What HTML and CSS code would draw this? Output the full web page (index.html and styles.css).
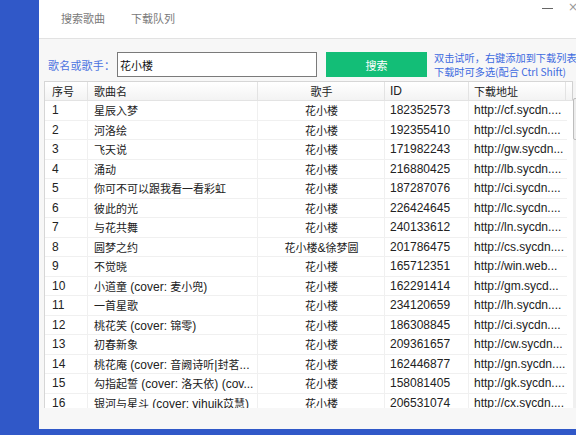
FILE: index.html
```html
<!DOCTYPE html>
<html lang="zh-CN">
<head>
<meta charset="utf-8">
<title>搜索歌曲</title>
<link rel="stylesheet" href="styles.css">
</head>
<body>
<div class="screen">
  <div class="sidebar"></div>
  <div class="window">
    <div class="titlebar">
      <div class="tabs">
        <span class="tab">搜索歌曲</span>
        <span class="tab">下载队列</span>
      </div>
      <div class="controls">
        <span class="min"></span>
        <span class="close">×</span>
      </div>
    </div>
    <div class="content">
      <div class="searchrow">
        <span class="label">歌名或歌手：</span>
        <div class="input"><span class="zh">花小楼</span></div>
        <button class="btn">搜索</button>
        <div class="hint">
          <div>双击试听，右键添加到下载列表</div>
          <div>下载时可多选(配合 Ctrl Shift)</div>
        </div>
      </div>
      <div class="listwrap">
        <div class="list">
          <div class="head">
            <div class="c num">序号</div>
            <div class="c song">歌曲名</div>
            <div class="c singer">歌手</div>
            <div class="c id">ID</div>
            <div class="c url">下载地址</div>
            <div class="c fill"></div>
          </div>
          <div class="rows">
            <div class="row"><div class="c num">1</div><div class="c song zh">星辰入梦</div><div class="c singer zh">花小楼</div><div class="c id">182352573</div><div class="c url">http://cf.sycdn....</div></div>
            <div class="row"><div class="c num">2</div><div class="c song zh">河洛绘</div><div class="c singer zh">花小楼</div><div class="c id">192355410</div><div class="c url">http://cl.sycdn....</div></div>
            <div class="row"><div class="c num">3</div><div class="c song zh">飞天说</div><div class="c singer zh">花小楼</div><div class="c id">171982243</div><div class="c url">http://gw.sycdn...</div></div>
            <div class="row"><div class="c num">4</div><div class="c song zh">涌动</div><div class="c singer zh">花小楼</div><div class="c id">216880425</div><div class="c url">http://lb.sycdn....</div></div>
            <div class="row"><div class="c num">5</div><div class="c song zh">你可不可以跟我看一看彩虹</div><div class="c singer zh">花小楼</div><div class="c id">187287076</div><div class="c url">http://ci.sycdn....</div></div>
            <div class="row"><div class="c num">6</div><div class="c song zh">彼此的光</div><div class="c singer zh">花小楼</div><div class="c id">226424645</div><div class="c url">http://lc.sycdn....</div></div>
            <div class="row"><div class="c num">7</div><div class="c song zh">与花共舞</div><div class="c singer zh">花小楼</div><div class="c id">240133612</div><div class="c url">http://ln.sycdn....</div></div>
            <div class="row"><div class="c num">8</div><div class="c song zh">圆梦之约</div><div class="c singer"><span class="zh">花小楼</span>&amp;<span class="zh">徐梦圆</span></div><div class="c id">201786475</div><div class="c url">http://cs.sycdn....</div></div>
            <div class="row"><div class="c num">9</div><div class="c song zh">不觉晓</div><div class="c singer zh">花小楼</div><div class="c id">165712351</div><div class="c url">http://win.web...</div></div>
            <div class="row"><div class="c num">10</div><div class="c song"><span class="zh">小道童</span> (cover: <span class="zh">麦小兜</span>)</div><div class="c singer zh">花小楼</div><div class="c id">162291414</div><div class="c url">http://gm.sycd...</div></div>
            <div class="row"><div class="c num">11</div><div class="c song zh">一首星歌</div><div class="c singer zh">花小楼</div><div class="c id">234120659</div><div class="c url">http://lh.sycdn....</div></div>
            <div class="row"><div class="c num">12</div><div class="c song"><span class="zh">桃花笑</span> (cover: <span class="zh">锦零</span>)</div><div class="c singer zh">花小楼</div><div class="c id">186308845</div><div class="c url">http://ci.sycdn....</div></div>
            <div class="row"><div class="c num">13</div><div class="c song zh">初春新象</div><div class="c singer zh">花小楼</div><div class="c id">209361657</div><div class="c url">http://cw.sycdn...</div></div>
            <div class="row"><div class="c num">14</div><div class="c song"><span class="zh">桃花庵</span> (cover: <span class="zh">音阙诗听</span>|<span class="zh">封茗</span>...</div><div class="c singer zh">花小楼</div><div class="c id">162446877</div><div class="c url">http://gn.sycdn....</div></div>
            <div class="row"><div class="c num">15</div><div class="c song"><span class="zh">勾指起誓</span> (cover: <span class="zh">洛天依</span>) (cov...</div><div class="c singer zh">花小楼</div><div class="c id">158081405</div><div class="c url">http://gk.sycdn....</div></div>
            <div class="row"><div class="c num">16</div><div class="c song"><span class="zh">银河与星斗</span> (cover: yihuik<span class="zh">苡慧</span>)</div><div class="c singer zh">花小楼</div><div class="c id">206531074</div><div class="c url">http://cx.sycdn....</div></div>
          </div>
        </div>
        <div class="scrollbar">
          <div class="arrow"></div>
          <div class="thumb"></div>
        </div>
      </div>
    </div>
  </div>
</div>
</body>
</html>
```
FILE: styles.css
```css
* { box-sizing: border-box; }
html, body { margin: 0; padding: 0; }
body {
  background: #3058c8;
  font-family: "Liberation Sans", "Noto Sans CJK SC", sans-serif;
  font-size: 12px;
  color: #222;
}
.zh {
  font-family: "Noto Sans CJK SC", sans-serif;
  font-size: 11px;
}
.screen {
  display: flex;
  width: 576px;
  height: 435px;
  overflow: hidden;
}
.sidebar {
  width: 39px;
  flex: none;
  background: #3058c8;
}
.window {
  width: 560px;
  flex: none;
  height: 429px;
  background: #f7f7f7;
  display: flex;
  flex-direction: column;
}
.titlebar {
  height: 39px;
  flex: none;
  background: #fff;
  border-bottom: 1px solid #e2e2e2;
  display: flex;
}
.tabs {
  display: flex;
  align-items: center;
  gap: 26px;
  padding-left: 22px;
  padding-bottom: 2px;
}
.tab {
  font-family: "Noto Sans CJK SC", sans-serif;
  font-size: 11px;
  color: #7a7a7a;
}
.controls {
  margin-left: auto;
  display: flex;
  align-items: flex-start;
  gap: 15px;
  padding-top: 1px;
  width: 57px;
}
.min {
  display: block;
  width: 11px;
  height: 1px;
  background: #666;
  margin-top: 7px;
}
.close {
  font-family: "DejaVu Sans", sans-serif;
  font-size: 12px;
  line-height: 12px;
  color: #999;
}
.content {
  flex: 1;
  display: flex;
  flex-direction: column;
  padding: 13px 0 0 5px;
}
.searchrow {
  display: flex;
  align-items: center;
  height: 25px;
  padding-left: 4px;
}
.label {
  font-family: "Noto Sans CJK SC", sans-serif;
  font-size: 11px;
  color: #4a72e0;
  width: 69px;
  letter-spacing: 0.2px;
}
.input {
  width: 200px;
  height: 25px;
  background: #fff;
  border: 1px solid #7a7a7a;
  display: flex;
  align-items: center;
  padding-left: 2px;
  color: #111;
}
.btn {
  margin-left: 9px;
  width: 101px;
  height: 25px;
  border: none;
  background: #13be77;
  color: #fff;
  font-family: "Noto Sans CJK SC", sans-serif;
  font-size: 11px;
  padding: 0;
}
.hint {
  margin-left: 7px;
  font-family: "Noto Sans CJK SC", sans-serif;
  font-size: 10.2px;
  line-height: 14px;
  color: #3d6ae0;
  white-space: nowrap;
  padding-top: 1px;
}
.listwrap {
  margin-top: 4px;
  height: 327px;
  display: flex;
  overflow: hidden;
}
.list {
  width: 529px;
  flex: none;
  background: #fff;
  border-left: 1px solid #d6d6d6;
  border-top: 1px solid #d6d6d6;
  display: flex;
  flex-direction: column;
}
.head, .row {
  display: flex;
}
.head {
  height: 19px;
  flex: none;
  background: linear-gradient(#ffffff, #f3f3f3);
  border-bottom: 1px solid #e3e3e3;
}
.head .c {
  border-right: 1px solid #e3e3e3;
  font-family: "Noto Sans CJK SC", sans-serif;
  font-size: 11px;
  line-height: 18px;
}
.head .c.id {
  font-family: "Liberation Sans", sans-serif;
  font-size: 12px;
}
.head .fill {
  flex: 1;
  border-right: 1px solid #d0d0d0;
}
.rows {
  flex: 1;
  overflow: hidden;
}
.row {
  height: 19.5px;
  border-bottom: 1px solid #f0f0f0;
  width: 522px;
}
.c {
  display: block;
  line-height: 18.5px;
  white-space: nowrap;
  overflow: hidden;
  border-right: 1px solid #f0f0f0;
  flex: none;
}
.num { width: 43px; padding-left: 7px; }
.song { width: 170px; padding-left: 6px; }
.singer { width: 127px; text-align: center; padding-left: 1px; }
.id { width: 84px; padding-left: 5px; }
.url { width: 97px; padding-left: 5px; }
.row .url { border-right: none; }
.scrollbar {
  width: 17px;
  flex: none;
  background: #f0f0f0;
  display: flex;
  flex-direction: column;
}
.arrow {
  height: 17px;
  background: #f4f4f4;
}
.thumb {
  height: 42px;
  border: 1px solid #bdbdbd;
  border-radius: 2px;
  background: #ececec;
}
```
